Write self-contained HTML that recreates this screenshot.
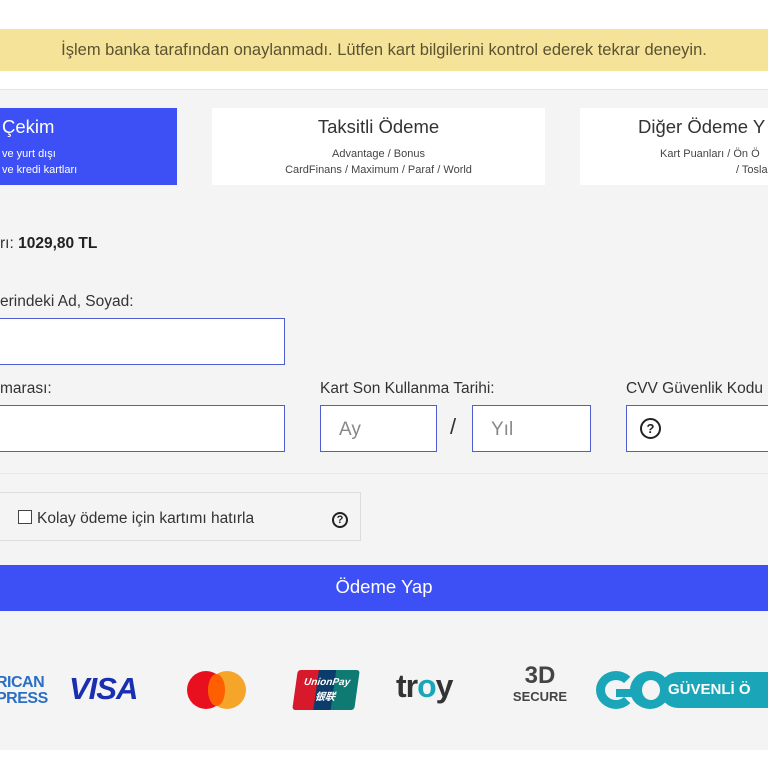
<!DOCTYPE html>
<html><head><meta charset="utf-8"><style>
*{margin:0;padding:0;box-sizing:border-box}
body{width:768px;height:768px;overflow:hidden;background:#fff;font-family:"Liberation Sans",sans-serif;position:relative;color:#333}
.abs{position:absolute}
.alert{left:0;top:29px;width:768px;height:42px;background:#f5e39a;color:#5b5330;font-size:16.5px;line-height:42px;text-align:center;letter-spacing:0}
.main{left:0;top:89px;width:768px;height:661px;background:#f4f4f4;border-top:1px solid #e4e4e4}
.tab{background:#fff;text-align:center;color:#333}
.tab h3{font-weight:normal;font-size:18.5px;margin-top:8px}
.tab p{font-size:11px;line-height:16px;color:#444}
.lbl{font-size:15.5px;color:#333}
.inp{background:#fff;border:1px solid #4f5fd0;height:47px}
.ph{font-size:19px;color:#888;line-height:47px;padding-left:18px}
.q{display:inline-block;width:18px;height:18px;border:2px solid #222;border-radius:50%;text-align:center;font-size:12px;font-weight:bold;line-height:14px;color:#222}
</style></head><body>
<div class="abs alert">İşlem banka tarafından onaylanmadı. Lütfen kart bilgilerini kontrol ederek tekrar deneyin.</div>
<div class="abs main"></div>

<div class="abs tab" style="left:-10px;top:108px;width:187px;height:77px;background:#3d50f5;color:#fff;text-align:left;padding-left:12px">
<h3 style="color:#fff">Çekim</h3>
<p style="color:#fff;margin-top:8px">ve yurt dışı<br>ve kredi kartları</p></div>
<div class="abs tab" style="left:212px;top:108px;width:333px;height:77px"><h3>Taksitli Ödeme</h3><p style="margin-top:8px">Advantage / Bonus<br>CardFinans / Maximum / Paraf / World</p></div>
<div class="abs tab" style="left:580px;top:108px;width:220px;height:77px;text-align:left;padding-left:58px"><h3>Diğer Ödeme Y</h3><p style="margin-top:8px;padding-left:22px">Kart Puanları / Ön Ö<br><span style="padding-left:76px">/ Tosla</span></p></div>

<div class="abs lbl" style="left:0;top:235px">rı: <b style="color:#222">1029,80 TL</b></div>
<div class="abs lbl" style="left:0;top:293px">erindeki Ad, Soyad:</div>
<div class="abs inp" style="left:-2px;top:318px;width:287px"></div>

<div class="abs lbl" style="left:0;top:380px">marası:</div>
<div class="abs lbl" style="left:320px;top:380px">Kart Son Kullanma Tarihi:</div>
<div class="abs lbl" style="left:626px;top:380px">CVV Güvenlik Kodu</div>
<div class="abs inp" style="left:-2px;top:405px;width:287px"></div>
<div class="abs inp" style="left:320px;top:405px;width:117px"><div class="ph">Ay</div></div>
<div class="abs" style="left:450px;top:414px;font-size:22px;color:#333">/</div>
<div class="abs inp" style="left:472px;top:405px;width:119px"><div class="ph">Yıl</div></div>
<div class="abs inp" style="left:626px;top:405px;width:160px;padding:12px 0 0 13px"><span class="q" style="width:21px;height:21px;line-height:17px;font-size:13px">?</span></div>

<div class="abs" style="left:0;top:473px;width:768px;border-top:1px solid #e8e8e8"></div>
<div class="abs" style="left:-2px;top:492px;width:363px;height:49px;border:1px solid #ddd;background:#f4f4f4"></div>
<div class="abs" style="left:18px;top:510px;width:14px;height:14px;border:1px solid #444;background:#fff"></div>
<div class="abs lbl" style="left:37px;top:510px">Kolay ödeme için kartımı hatırla</div>
<div class="abs" style="left:332px;top:510px"><span class="q" style="width:16px;height:16px;line-height:12px;font-size:11px">?</span></div>

<div class="abs" style="left:0;top:565px;width:768px;height:46px;background:#3d50f5;color:#fff;text-align:center;font-size:18.5px;line-height:44px">Ödeme Yap</div>

<!-- logos -->
<div class="abs" style="left:-4px;top:675px;color:#2a6fc4;font-weight:bold;font-size:16px;line-height:16px;letter-spacing:-0.5px">RICAN<br>PRESS</div>
<div class="abs" style="left:69px;top:671px;color:#1a2fb0;font-weight:bold;font-style:italic;font-size:31px;letter-spacing:-1px">VISA</div>
<div class="abs" style="left:187px;top:671px;width:38px;height:38px;border-radius:50%;background:#e8101e"></div>
<div class="abs" style="left:208px;top:671px;width:38px;height:38px;border-radius:50%;background:#f5a020;opacity:.95"></div>
<div class="abs" style="left:208px;top:674px;width:17px;height:32px;background:#ff5f00;border-radius:50%"></div>
<div class="abs" style="left:295px;top:670px;width:62px;height:40px;transform:skewX(-8deg);background:linear-gradient(90deg,#d8182b 0 34%,#0b3c6b 34% 62%,#0e7a72 62%);border-radius:3px;color:#fff;font-size:10px;font-style:italic;font-weight:bold;text-align:center;padding-top:7px">UnionPay<br>银联</div>
<div class="abs" style="left:396px;top:668px;font-weight:bold;font-size:32px;color:#333;letter-spacing:-1px">tr<span style="color:#1aa6b8">o</span>y</div>
<div class="abs" style="left:512px;top:663px;width:56px;height:52px;text-align:center;color:#444;font-weight:bold"><div style="font-size:24px;line-height:26px">3D</div><div style="font-size:13px">SECURE</div></div>
<div class="abs" style="left:596px;top:671px;width:40px;height:38px;border-radius:50%;border:9px solid #1aa6b8;border-right-color:transparent"></div>
<div class="abs" style="left:616px;top:689px;width:16px;height:8px;background:#1aa6b8"></div>
<div class="abs" style="left:630px;top:671px;width:40px;height:38px;border-radius:50%;background:#1aa6b8"></div>
<div class="abs" style="left:642px;top:680px;width:18px;height:20px;border-radius:50%;background:#f4f4f4"></div>
<div class="abs" style="left:660px;top:672px;width:120px;height:36px;background:#1aa6b8;color:#fff;font-weight:bold;font-size:15px;line-height:36px;padding-left:8px;border-radius:18px 0 0 18px">GÜVENLİ Ö</div>
</body></html>
